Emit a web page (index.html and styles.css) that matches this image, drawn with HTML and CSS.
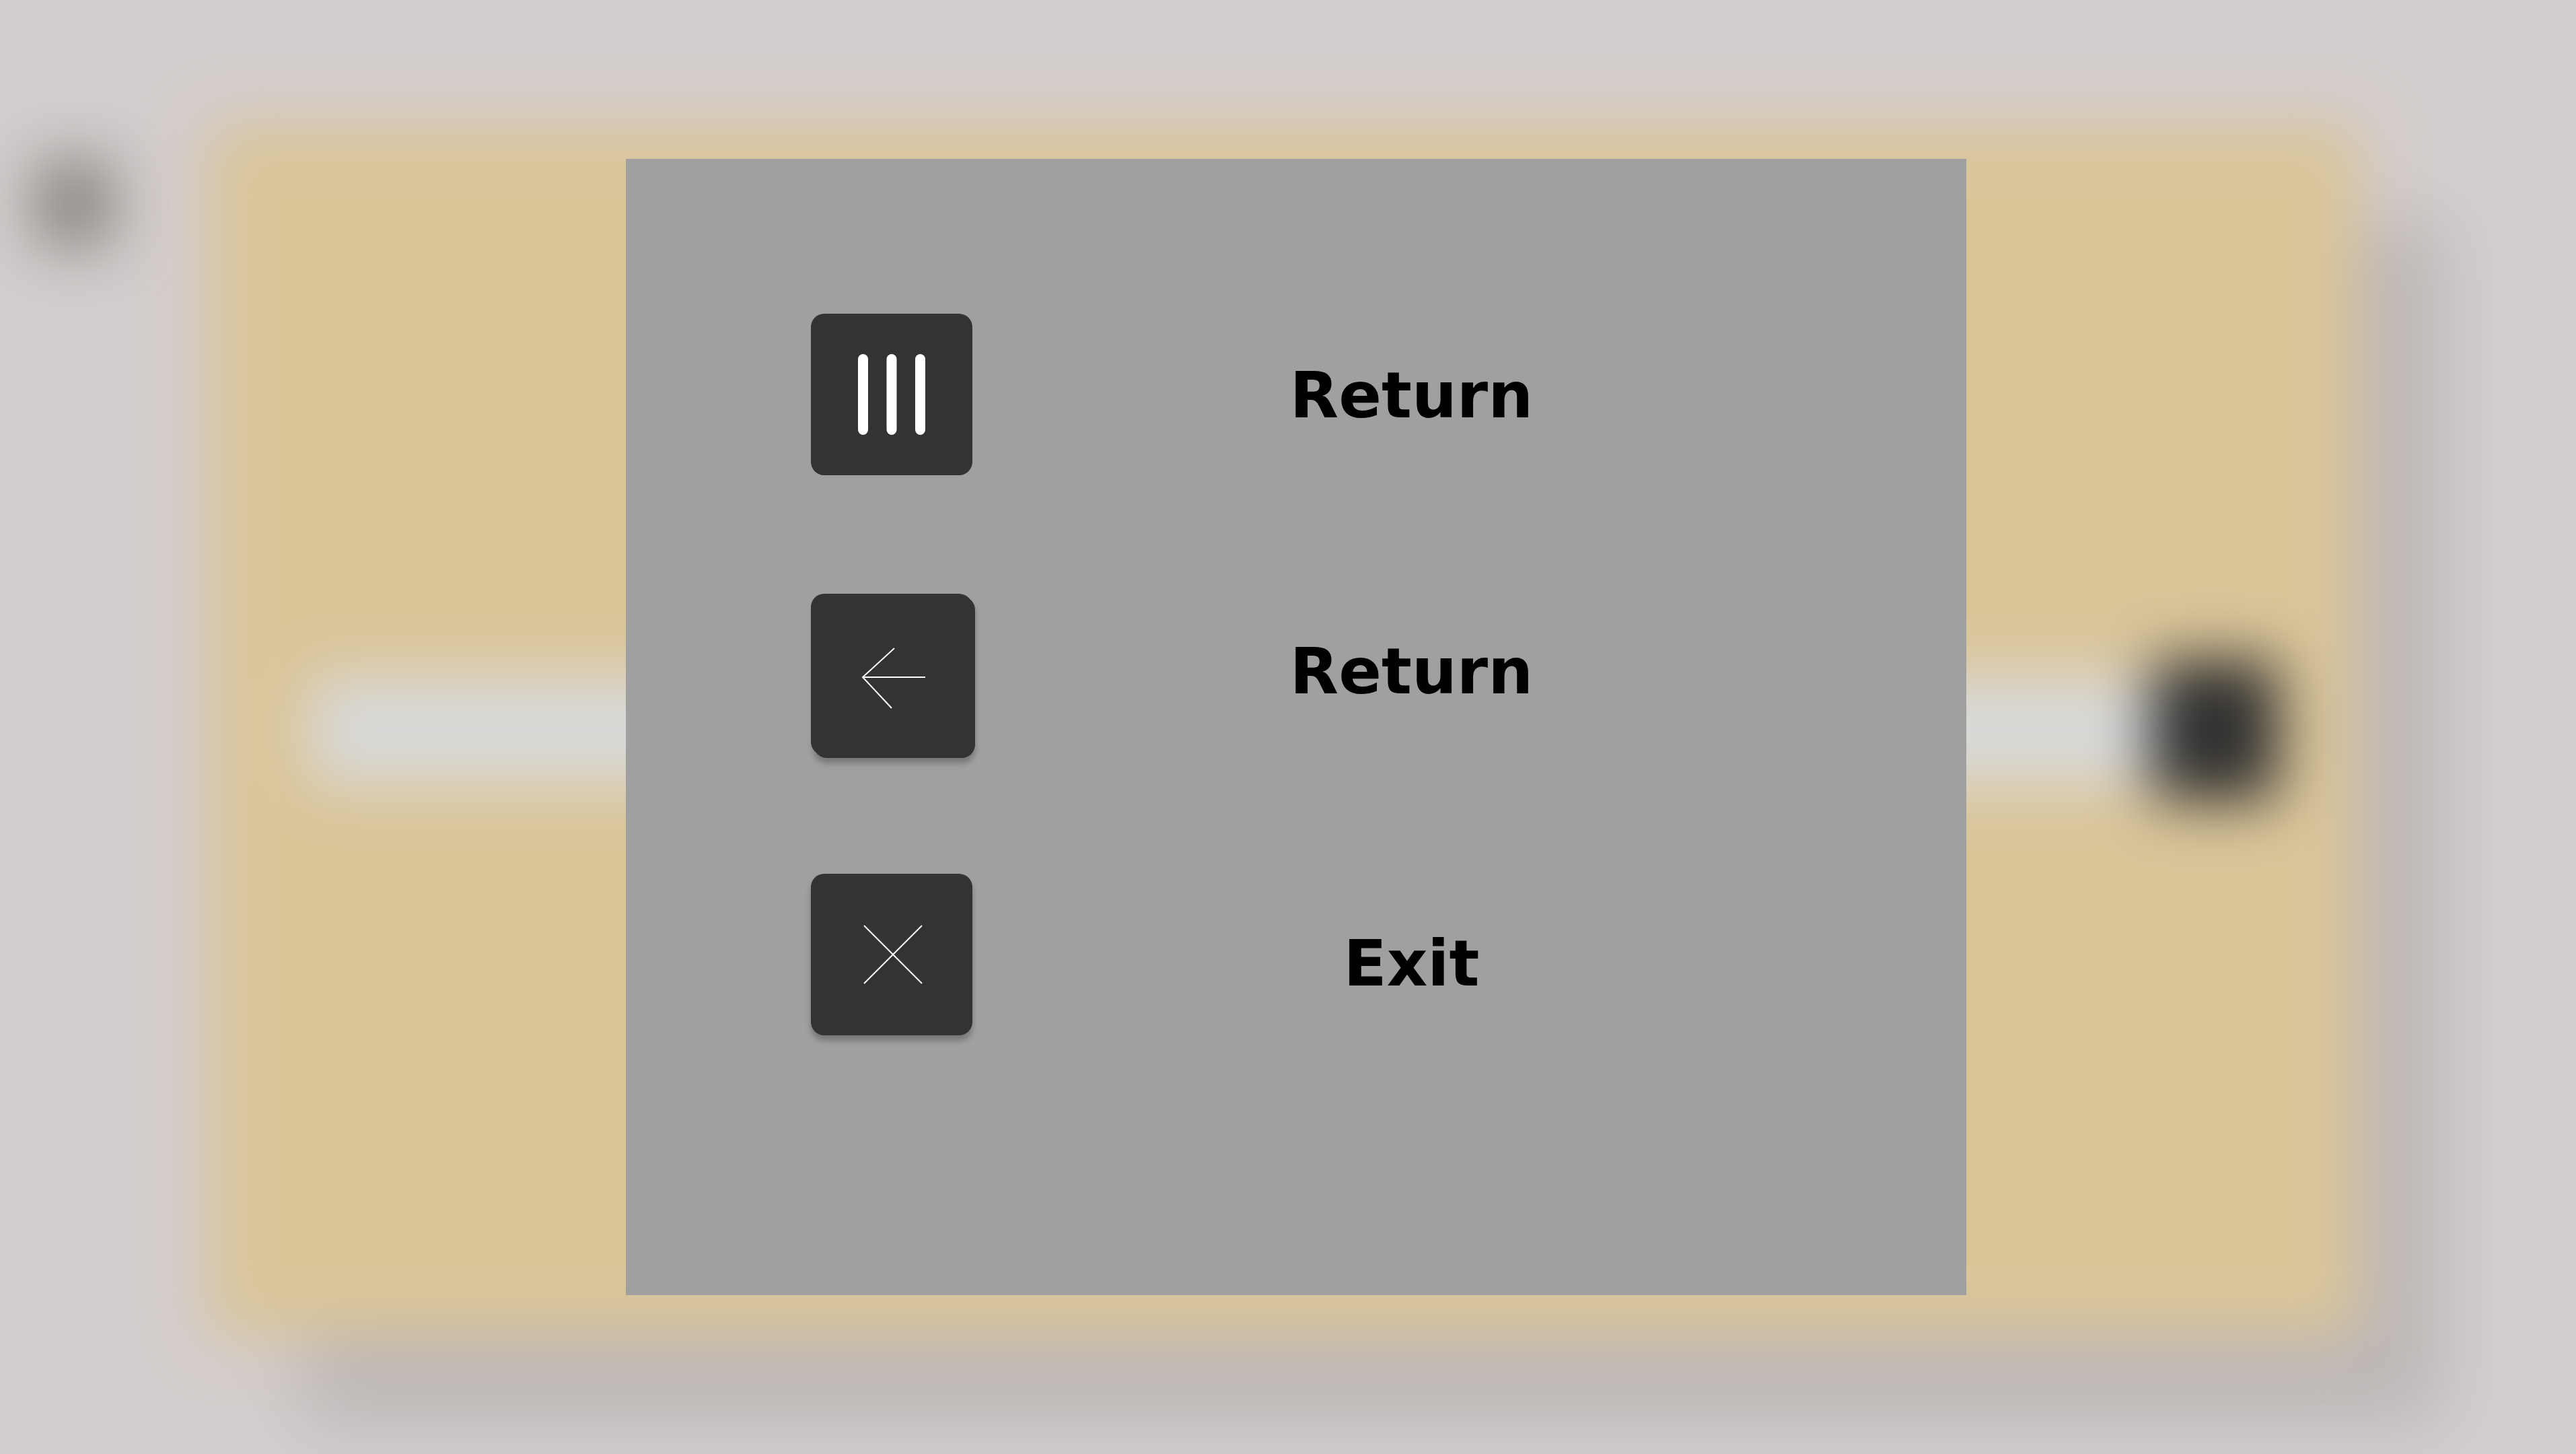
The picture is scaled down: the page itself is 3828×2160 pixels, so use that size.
FILE: index.html
```html
<!DOCTYPE html>
<html lang="en">
<head>
  <meta charset="utf-8">
  <title>Menu</title>
  <link rel="stylesheet" href="styles.css">
</head>
<body>
  <div class="backdrop" aria-hidden="true">
    <div class="menu-chip"></div>
    <div class="board">
      <div class="track"></div>
      <div class="knob"></div>
    </div>
  </div>
  <main class="dialog" role="dialog" aria-label="Menu">
    <div class="actions">
      <button class="key" type="button" aria-labelledby="menu-label">
        <svg class="icon" viewBox="0 0 240 240" aria-hidden="true">
          <rect x="70" y="60" width="15" height="120" rx="7.5" fill="#fff"/>
          <rect x="112.5" y="60" width="15" height="120" rx="7.5" fill="#fff"/>
          <rect x="155" y="60" width="15" height="120" rx="7.5" fill="#fff"/>
        </svg>
      </button>
      <button class="key key-raised key-stacked" type="button" aria-labelledby="back-label">
        <svg class="icon" viewBox="0 0 240 240" aria-hidden="true">
          <path d="M170 124H77M124 81L77 124L120 170" fill="none" stroke="#fff" stroke-width="2"/>
        </svg>
      </button>
      <button class="key key-raised" type="button" aria-labelledby="exit-label">
        <svg class="icon" viewBox="0 0 240 240" aria-hidden="true">
          <path d="M79 77L165 163M165 77L79 163" fill="none" stroke="#fff" stroke-width="2"/>
        </svg>
      </button>
    </div>
    <div class="labels">
      <span class="label" id="menu-label">Return</span>
      <span class="label" id="back-label">Return</span>
      <span class="label" id="exit-label">Exit</span>
    </div>
  </main>
</body>
</html>
```
FILE: styles.css
```css
* {
  box-sizing: border-box;
}

body {
  position: relative;
  min-height: 100vh;
  margin: 0;
  padding: 236px 906px 236px 930px;
  background: #d3cdcd;
  font-family: "DejaVu Sans", sans-serif;
}

/* Game screen behind the dialog, out of focus */
.backdrop {
  position: absolute;
  inset: 0;
  display: flex;
  align-items: flex-start;
  gap: 140px;
  padding: 185px 322px 175px 50px;
  overflow: hidden;
  filter: blur(44px);
}

.menu-chip {
  width: 120px;
  height: 130px;
  margin-top: 52px;
  border-radius: 16px;
  background: #8c8685;
}

.board {
  display: flex;
  flex: 1;
  align-items: center;
  align-self: stretch;
  padding: 0 120px 0 150px;
  border-radius: 20px;
  background: #dac599;
  box-shadow: 130px 136px 60px -8px rgba(0, 0, 0, 0.11);
}

.track {
  flex: 1;
  height: 160px;
  background: #d9d9d9;
}

.knob {
  width: 190px;
  height: 208px;
  border-radius: 20px;
  background: #303030;
}

.dialog {
  position: relative;
  display: grid;
  grid-template-columns: 248px 1fr;
  padding: 230px 548px 386px 275px;
  background: #a0a0a0;
}

.actions {
  display: flex;
  flex-direction: column;
  justify-content: space-between;
  gap: 176px;
}

.key {
  width: 240px;
  height: 240px;
  padding: 0;
  border: 0;
  border-radius: 20px;
  background: #333;
}

.key-raised {
  box-shadow: 0 8px 8px rgba(0, 0, 0, 0.25);
}

.key-stacked {
  box-shadow: 4px 4px 0 #333, 4px 12px 8px rgba(0, 0, 0, 0.25);
}

.icon {
  display: block;
  width: 100%;
  height: 100%;
}

.labels {
  display: grid;
  grid-template-rows: 410px 434px 108px;
  align-content: start;
  padding: 68px 0 0 368px;
}

.label {
  font-size: 94px;
  font-weight: 700;
  line-height: 108px;
  text-align: center;
}
```
